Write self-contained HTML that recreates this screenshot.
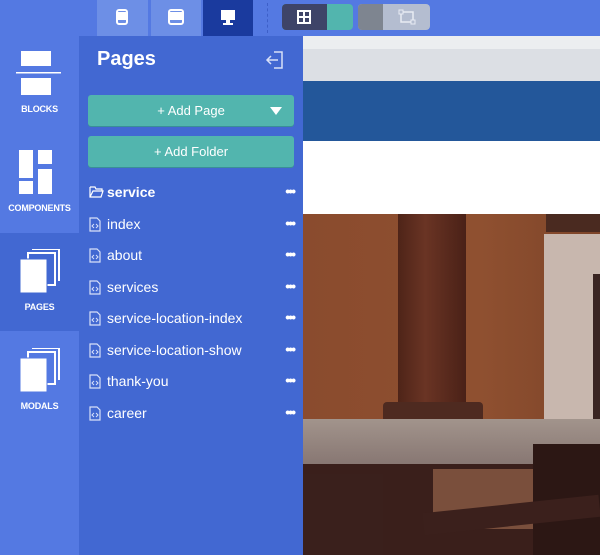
<!DOCTYPE html>
<html><head><meta charset="utf-8"><style>
*{margin:0;padding:0;box-sizing:border-box}
body{width:600px;height:555px;overflow:hidden;position:relative;background:#5479e2;font-family:"Liberation Sans",sans-serif;color:#fff}
.abs{position:absolute}
.dev{top:0;height:36px;background:#6d8fe6}
.side{left:0;top:36px;width:79px;height:519px;background:#5479e2}
.lab{position:absolute;left:0;width:79px;text-align:center;font-size:9px;font-weight:bold;letter-spacing:-0.2px}
.panel{left:79px;top:36px;width:224px;height:519px;background:#4268d2}
.btn{position:absolute;left:9px;width:206px;height:31px;background:#52b5ae;border-radius:3px;font-size:13px;text-align:center;line-height:31px;box-shadow:0 1px 0 #3a8f98}
.row{position:absolute;left:10px;width:205px;font-size:14px;height:20px;line-height:20px}
.row svg{position:absolute;left:0;top:3px}
.row span{position:absolute;left:18px}
.row i{position:absolute;right:0;top:-1px;font-style:normal;font-weight:bold;font-size:14px;letter-spacing:-2px}
</style></head><body>
<div class="abs dev" style="left:97px;width:51px"></div>
<div class="abs dev" style="left:151px;width:50px"></div>
<div class="abs dev" style="left:203px;width:50px;background:#1a3a9e"></div>
<svg class="abs" style="left:116px;top:9px" width="12" height="16"><rect x="1" y="1" width="10" height="14" rx="2" fill="none" stroke="#fff" stroke-width="2"/><rect x="2" y="3" width="8" height="8" fill="#fff"/></svg>
<svg class="abs" style="left:168px;top:9px" width="16" height="16"><rect x="1" y="1" width="14" height="14" rx="2" fill="none" stroke="#fff" stroke-width="2"/><rect x="2" y="3" width="12" height="8" fill="#fff"/></svg>
<svg class="abs" style="left:220px;top:9px" width="16" height="16"><rect x="1" y="1" width="14" height="10" fill="#fff"/><rect x="6" y="11" width="4" height="3" fill="#fff"/><rect x="3" y="14" width="10" height="2" fill="#fff"/></svg>
<div class="abs" style="left:267px;top:3px;width:0;height:30px;border-left:1px dashed #3d5fc8"></div>
<div class="abs" style="left:282px;top:4px;width:71px;height:26px;border-radius:4px;background:#52b5ae;overflow:hidden"><div style="width:45px;height:26px;background:#3e4468"></div></div>
<svg class="abs" style="left:297px;top:10px" width="14" height="14"><rect x="1" y="1" width="12" height="12" fill="none" stroke="#fff" stroke-width="2"/><path d="M7 1V13M1 7H13" stroke="#fff" stroke-width="2"/></svg>
<div class="abs" style="left:358px;top:4px;width:72px;height:26px;border-radius:4px;background:#b4bdd0;overflow:hidden"><div style="width:25px;height:26px;background:#7e8590"></div></div>
<svg class="abs" style="left:397px;top:9px" width="20" height="16"><rect x="4" y="3" width="12" height="10" fill="none" stroke="#e8ecf3" stroke-width="1.5"/><rect x="2" y="1" width="4" height="4" fill="#b4bdd0" stroke="#e8ecf3"/><rect x="14" y="11" width="4" height="4" fill="#b4bdd0" stroke="#e8ecf3"/></svg>
<div class="abs" style="left:303px;top:36px;width:297px;height:13px;background:#eceef0"></div>
<div class="abs" style="left:303px;top:49px;width:297px;height:32px;background:#dcdfe4"></div>
<div class="abs" style="left:303px;top:81px;width:297px;height:60px;background:#23579a"></div>
<div class="abs" style="left:303px;top:141px;width:297px;height:74px;background:#fff"></div>
<div class="abs" style="left:303px;top:214px;width:297px;height:341px;background:linear-gradient(90deg,#8a4b2e,#8f5030 60%,#7d4429);overflow:hidden">
 <div class="abs" style="left:243px;top:0;width:54px;height:18px;background:#4a2a20"></div>
 <div class="abs" style="left:241px;top:20px;width:56px;height:190px;background:#c8b7ae"></div>
 <div class="abs" style="left:290px;top:60px;width:7px;height:150px;background:#3a2522"></div>
 <div class="abs" style="left:95px;top:0;width:68px;height:196px;background:linear-gradient(90deg,#4e2418,#6a3424 40%,#4a2117)"></div>
 <div class="abs" style="left:80px;top:188px;width:100px;height:24px;background:#4e2a20;border-radius:4px"></div>
 <div class="abs" style="left:0;top:205px;width:297px;height:50px;background:linear-gradient(180deg,#a2948c,#857470)"></div>
 <div class="abs" style="left:0;top:250px;width:297px;height:91px;background:#3a1f1b"></div>
 <div class="abs" style="left:130px;top:255px;width:100px;height:60px;background:#7a4f3c"></div>
 <div class="abs" style="left:230px;top:230px;width:67px;height:111px;background:#2c1714"></div>
 <div class="abs" style="left:120px;top:290px;width:177px;height:22px;background:#3b201c;transform:rotate(-6deg)"></div>
 <div class="abs" style="left:0;top:260px;width:80px;height:81px;background:#3a201c"></div>
</div>
<div class="abs side"></div>
<div class="abs" style="left:0;top:233px;width:79px;height:98px;background:#4268d2"></div>
<svg class="abs" style="left:16px;top:51px" width="46" height="46"><rect x="5" y="0" width="30" height="15" fill="#fff"/><rect x="0" y="21" width="45" height="1.5" fill="#fff"/><rect x="5" y="27" width="30" height="17" fill="#fff"/></svg>
<div class="lab" style="top:104px">BLOCKS</div>
<svg class="abs" style="left:19px;top:150px" width="40" height="45"><rect x="0" y="0" width="14" height="28" fill="#fff"/><rect x="19" y="0" width="14" height="14" fill="#fff"/><rect x="19" y="19" width="14" height="25" fill="#fff"/><rect x="0" y="31" width="14" height="13" fill="#fff"/></svg>
<div class="lab" style="top:203px">COMPONENTS</div>
<svg class="abs" style="left:17px;top:249px" width="44" height="46"><path d="M15 0H42V32" fill="none" stroke="#fff" stroke-width="2"/><rect x="11" y="4" width="27" height="32" fill="#4268d2" stroke="#fff" stroke-width="2"/><rect x="3" y="10" width="27" height="34" fill="#fff"/><rect x="3" y="10" width="27" height="34" fill="none" stroke="#4268d2" stroke-width="1"/></svg>
<div class="lab" style="top:302px">PAGES</div>
<svg class="abs" style="left:17px;top:348px" width="44" height="46"><path d="M15 0H42V32" fill="none" stroke="#fff" stroke-width="2"/><rect x="11" y="4" width="27" height="32" fill="#5479e2" stroke="#fff" stroke-width="2"/><rect x="3" y="10" width="27" height="34" fill="#fff"/><rect x="3" y="10" width="27" height="34" fill="none" stroke="#5479e2" stroke-width="1"/></svg>
<div class="lab" style="top:401px">MODALS</div>
<div class="abs panel">
 <div class="abs" style="left:18px;top:12px;font-size:20px;font-weight:bold">Pages</div>
 <svg class="abs" style="left:186px;top:15px" width="20" height="18"><path d="M9 1H17V17H9" fill="none" stroke="#d8e0f8" stroke-width="1.5"/><path d="M13 9H2M6 5L2 9L6 13" fill="none" stroke="#d8e0f8" stroke-width="1.5"/></svg>
 <div class="btn" style="top:59px">+ Add Page<svg class="abs" style="right:12px;top:12px" width="12" height="8"><path d="M0 0H12L6 8Z" fill="#fff"/></svg></div>
 <div class="btn" style="top:100px">+ Add Folder</div>
 <div class="row" style="top:146px;font-weight:bold"><svg width="15" height="13"><path d="M1 2H6L7 4H13V6M1 2V12H12L14 6H4L1 12" fill="none" stroke="#fff" stroke-width="1.2"/></svg><span>service</span><i>•••</i></div>
 <div class="row" style="top:178px"><svg width="12" height="15"><path d="M1 1H8L11 4V14H1Z" fill="none" stroke="#d8e0f8" stroke-width="1.2"/><path d="M5 7L3 9L5 11M7 7L9 9L7 11" fill="none" stroke="#d8e0f8"/></svg><span>index</span><i>•••</i></div>
 <div class="row" style="top:209px"><svg width="12" height="15"><path d="M1 1H8L11 4V14H1Z" fill="none" stroke="#d8e0f8" stroke-width="1.2"/><path d="M5 7L3 9L5 11M7 7L9 9L7 11" fill="none" stroke="#d8e0f8"/></svg><span>about</span><i>•••</i></div>
 <div class="row" style="top:241px"><svg width="12" height="15"><path d="M1 1H8L11 4V14H1Z" fill="none" stroke="#d8e0f8" stroke-width="1.2"/><path d="M5 7L3 9L5 11M7 7L9 9L7 11" fill="none" stroke="#d8e0f8"/></svg><span>services</span><i>•••</i></div>
 <div class="row" style="top:272px"><svg width="12" height="15"><path d="M1 1H8L11 4V14H1Z" fill="none" stroke="#d8e0f8" stroke-width="1.2"/><path d="M5 7L3 9L5 11M7 7L9 9L7 11" fill="none" stroke="#d8e0f8"/></svg><span>service-location-index</span><i>•••</i></div>
 <div class="row" style="top:304px"><svg width="12" height="15"><path d="M1 1H8L11 4V14H1Z" fill="none" stroke="#d8e0f8" stroke-width="1.2"/><path d="M5 7L3 9L5 11M7 7L9 9L7 11" fill="none" stroke="#d8e0f8"/></svg><span>service-location-show</span><i>•••</i></div>
 <div class="row" style="top:335px"><svg width="12" height="15"><path d="M1 1H8L11 4V14H1Z" fill="none" stroke="#d8e0f8" stroke-width="1.2"/><path d="M5 7L3 9L5 11M7 7L9 9L7 11" fill="none" stroke="#d8e0f8"/></svg><span>thank-you</span><i>•••</i></div>
 <div class="row" style="top:367px"><svg width="12" height="15"><path d="M1 1H8L11 4V14H1Z" fill="none" stroke="#d8e0f8" stroke-width="1.2"/><path d="M5 7L3 9L5 11M7 7L9 9L7 11" fill="none" stroke="#d8e0f8"/></svg><span>career</span><i>•••</i></div>
</div>
</body></html>
